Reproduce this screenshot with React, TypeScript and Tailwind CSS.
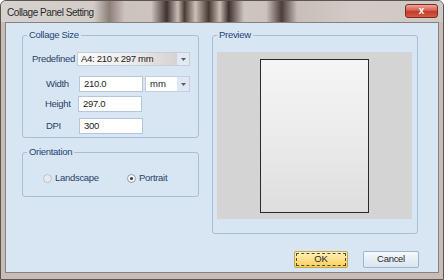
import React from 'react';

const GroupBox: React.FC<{ label: string; className?: string; children?: React.ReactNode }> = ({
  label,
  className = '',
  children,
}) => (
  <div className={`relative border border-[#a9bdd6] rounded-[3px] ${className}`}>
    <span className="absolute left-[4px] -top-[7px] px-[2px] bg-[#d8e5f3] text-[#1d4479] text-[9.5px] leading-[12px] tracking-[-0.3px]">
      {label}
    </span>
    {children}
  </div>
);

const Arrow = () => (
  <svg width="5" height="3" viewBox="0 0 5 3">
    <path d="M0 0h5L2.5 3z" fill="#4d5d74" />
  </svg>
);

const TextBox: React.FC<{ value: string }> = ({ value }) => (
  <div className="w-[64px] h-[16px] border border-[#b4c6dc] bg-white flex items-center pl-[4px] text-[9.5px] text-[#222] tracking-[-0.3px]">
    {value}
  </div>
);

const Radio: React.FC<{ checked?: boolean; label: string; className?: string }> = ({ checked, label, className = '' }) => (
  <div className={`flex items-center gap-[3px] ${className}`}>
    <div
      className={`w-[9px] h-[9px] rounded-full border flex items-center justify-center ${
        checked ? 'border-[#8d9db2] bg-[#f4f6f9]' : 'border-[#b9c3cf] bg-[#e6e9ee]'
      }`}
    >
      {checked && <div className="w-[3px] h-[3px] rounded-full bg-[#2d3a4d]" />}
    </div>
    <span className="text-[#2a4468] text-[9.5px] tracking-[-0.3px]">{label}</span>
  </div>
);

export default function App() {
  return (
    <div className="w-[444px] h-[280px] flex flex-col bg-[#c7bcb7] border border-[#5f5450] rounded-t-[6px] overflow-hidden font-['Liberation_Sans',sans-serif]">
      {/* title bar */}
      <div className="h-[21px] flex items-center justify-between pl-[6px] pr-[5px] bg-[linear-gradient(90deg,#d6d2d0_0%,#d3ccc8_21%,#8d7f78_24.5%,#cdc3bd_28%,#cec4be_34%,#3f322d_37.5%,#c8bcb5_40%,#4a3c36_41.5%,#cbbfb8_44%,#463832_47%,#c9bdb6_49.5%,#3e302a_51.5%,#cfc5bf_55%,#cdc3bd_60%,#4b3d37_63.5%,#c9beb8_67%,#d2cbc7_80%,#cfc9c6_100%)]">
        <span className="text-[10px] text-[#2a2a2a] tracking-[-0.45px] pt-[1px]">Collage Panel Setting</span>
        <div className="w-[33px] h-[14px] -mt-[2px] rounded-[3px] border border-[#7c2a22] bg-[linear-gradient(180deg,#e9a99c_0%,#d7604f_45%,#c33a2c_55%,#d75a45_100%)] flex items-center justify-center">
          <span className="text-white text-[10px] font-bold leading-none">x</span>
        </div>
      </div>

      {/* client area */}
      <div className="flex-1 mx-[4px] mb-[6px] border border-[#8b817c] bg-[#d8e5f3] flex flex-col pl-[16px] pr-[19px] pt-[12px]">
        <div className="flex gap-[13px]">
          <div className="w-[177px] flex flex-col gap-[14px]">
            <GroupBox label="Collage Size" className="h-[103px] pt-[16px] pl-[9px]">
              <div className="flex items-center">
                <span className="w-[45px] text-[#2a4468] text-[9.5px] tracking-[-0.3px]">Predefined</span>
                <div className="w-[113px] h-[14px] border border-[#c3cfdd] flex bg-[linear-gradient(90deg,#fbfbfb_0%,#efeeee_45%,#d6d3d1_88%)]">
                  <span className="flex-1 pl-[3px] text-[9.5px] leading-[12px] text-[#222] tracking-[-0.3px]">A4: 210 x 297 mm</span>
                  <div className="w-[12px] flex items-center justify-center bg-[#e2e9f2]">
                    <Arrow />
                  </div>
                </div>
              </div>
              <div className="flex flex-col gap-[4px] mt-[10px] pl-[14px]">
                <div className="flex items-center">
                  <span className="w-[33px] text-[#2a4468] text-[9.5px] tracking-[-0.3px]">Width</span>
                  <TextBox value="210.0" />
                  <div className="ml-[2px] w-[45px] h-[16px] border border-[#c3cfdd] bg-white flex">
                    <span className="flex-1 pl-[4px] text-[9.5px] leading-[14px] text-[#222]">mm</span>
                    <div className="w-[12px] flex items-center justify-center bg-[#dfe7f2]">
                      <Arrow />
                    </div>
                  </div>
                </div>
                <div className="flex items-center">
                  <span className="w-[33px] -ml-[1px] pr-[1px] text-[#2a4468] text-[9.5px] tracking-[-0.3px]">Height</span>
                  <TextBox value="297.0" />
                </div>
                <div className="flex items-center mt-[2px]">
                  <span className="w-[33px] text-[#2a4468] text-[9.5px] tracking-[-0.3px]">DPI</span>
                  <TextBox value="300" />
                </div>
              </div>
            </GroupBox>
            <GroupBox label="Orientation" className="h-[45px] pt-[18px] pl-[20px]">
              <div className="flex">
                <Radio label="Landscape" className="w-[84px]" />
                <Radio checked label="Portrait" />
              </div>
            </GroupBox>
          </div>

          <GroupBox label="Preview" className="w-[206px] h-[199px] pt-[16px] pl-[4px] pr-[5px]">
            <div className="h-[167px] bg-[#d4d4d4] flex justify-center pt-[7px]">
              <div className="w-[109px] h-[154px] border border-[#2a2a2a] bg-[linear-gradient(180deg,#f5f5f5_0%,#ebebeb_50%,#dedede_100%)]" />
            </div>
          </GroupBox>
        </div>

        <div className="flex justify-end gap-[15px] mt-[17px]">
          <div className="w-[54px] h-[17px] rounded-[2px] border border-[#c4a64f] bg-[linear-gradient(180deg,#fff3c3_0%,#fde08a_50%,#f6cf5e_100%)] p-[1px]">
            <div className="w-full h-full border border-dashed border-[#5a4a20] flex items-center justify-center text-[9.5px] text-[#2a2a2a]">
              OK
            </div>
          </div>
          <div className="w-[56px] h-[17px] rounded-[2px] border border-[#9fb4cf] bg-[linear-gradient(180deg,#f7f9fc_0%,#e8eef6_50%,#dbe4ef_100%)] flex items-center justify-center text-[9.5px] text-[#2a2a2a] tracking-[-0.3px]">
            Cancel
          </div>
        </div>
      </div>
    </div>
  );
}
